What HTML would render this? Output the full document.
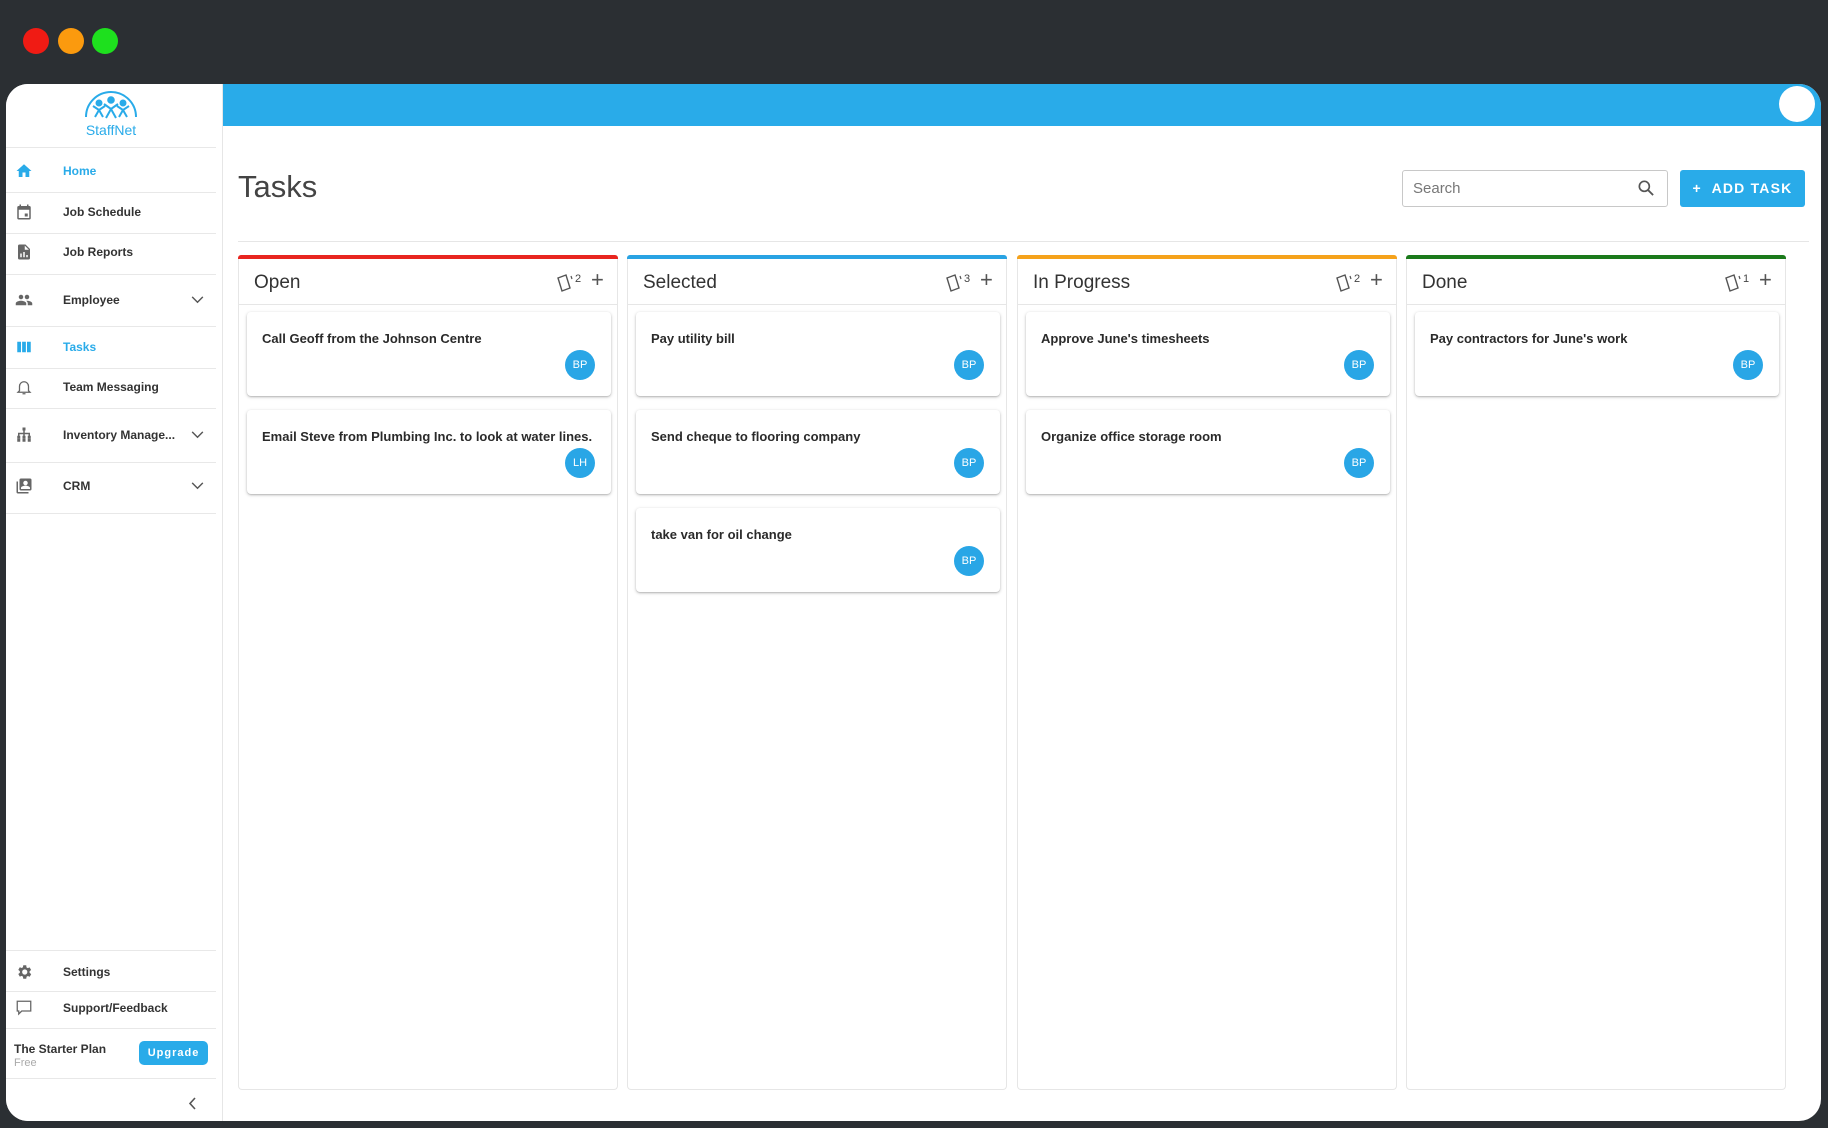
<!DOCTYPE html>
<html><head><meta charset="utf-8"><style>
*{box-sizing:border-box;margin:0;padding:0}
body{width:1828px;height:1128px;background:#2b2f33;font-family:"Liberation Sans",Arial,sans-serif;position:relative;overflow:hidden}
.abs{position:absolute}
.dot{position:absolute;width:26px;height:26px;border-radius:50%;top:28px}
.win{position:absolute;left:6px;top:84px;width:1815px;height:1037px;background:#fff;border-radius:22px;overflow:hidden}
.side{position:absolute;left:0;top:0;width:217px;height:1037px;border-right:1px solid #e6e6e6;background:#fff}
.div{position:absolute;left:0;width:210px;height:1px;background:#e8e8e8}
.mi{position:absolute;left:57px;font-size:12px;font-weight:bold;color:#333;transform:translateY(-50%)}
.ic{position:absolute;left:9px;width:18px;height:18px;transform:translateY(-50%)}
.chev{position:absolute;left:185px;transform:translateY(-50%)}
.col{position:absolute;top:171px;width:380px;height:835px;border:1px solid #e6e6e6;border-top:none;border-radius:4px;background:#fff}
.bar{position:absolute;left:-1px;right:-1px;top:0;height:4px;border-radius:3px 3px 0 0}
.ch{position:absolute;left:0;right:0;top:4px;height:46px;border-bottom:1px solid #e6e6e6}
.ct{position:absolute;left:15px;top:13px;font-size:19px;color:#333}
.card{position:absolute;left:8px;width:364px;height:84px;background:#fff;border-radius:4px;box-shadow:0 1px 3px rgba(0,0,0,.25),0 1px 1px rgba(0,0,0,.1)}
.card .t{position:absolute;left:15px;top:19px;font-size:13px;font-weight:bold;color:#2a2a2a;white-space:nowrap}
.av{position:absolute;right:16px;top:38px;width:30px;height:30px;border-radius:50%;background:#29a6e6;color:#fff;font-size:11px;text-align:center;line-height:30px}
</style></head><body>
<div class="dot" style="left:23px;background:#f01b14"></div>
<div class="dot" style="left:58px;background:#fb9a0e"></div>
<div class="dot" style="left:92px;background:#1ee01e"></div>

<div class="win">
 <div class="abs" style="left:217px;top:0;right:0;height:42px;background:#29abe9"></div>
 <div class="abs" style="left:1773px;top:2px;width:36px;height:36px;border-radius:50%;background:#fff"></div>

 <div class="side">
  <svg class="abs" style="left:76px;top:7px" width="58" height="30" viewBox="0 0 58 30" fill="none" stroke="#29abe9" stroke-width="2">
   <path d="M4 26 A25 25 0 0 1 54 26"/>
   <circle cx="17" cy="12" r="2.5" fill="#29abe9"/><circle cx="29" cy="9" r="2.8" fill="#29abe9"/><circle cx="41" cy="12" r="2.5" fill="#29abe9"/>
   <path d="M11 15l6 4 6-4M17 19l-4 7M17 19l4 7M22 13l7 5 7-5M29 18l-5 9M29 18l5 9M35 15l6 4 6-4M41 19l-4 7M41 19l4 7"/>
  </svg>
  <div class="abs" style="left:0;width:210px;top:38px;text-align:center;font-size:14px;color:#29abe9">StaffNet</div>
  <div class="div" style="top:63px"></div>
  <div class="div" style="top:108px"></div><div class="div" style="top:149px"></div><div class="div" style="top:190px"></div>
  <div class="div" style="top:242px"></div><div class="div" style="top:284px"></div><div class="div" style="top:324px"></div>
  <div class="div" style="top:378px"></div><div class="div" style="top:429px"></div>

  <svg class="ic" style="top:87px" viewBox="0 0 24 24"><path fill="#29abe9" d="M10 20v-6h4v6h5v-8h3L12 3 2 12h3v8z"/></svg>
  <div class="mi" style="top:87px;color:#29abe9">Home</div>
  <svg class="ic" style="top:128px" viewBox="0 0 24 24"><path fill="#666" d="M19 4h-1V2h-2v2H8V2H6v2H5a2 2 0 0 0-2 2v14a2 2 0 0 0 2 2h14a2 2 0 0 0 2-2V6a2 2 0 0 0-2-2zm0 16H5V9h14zm-6-6h4v4h-4z"/></svg>
  <div class="mi" style="top:128px">Job Schedule</div>
  <svg class="ic" style="top:168px" viewBox="0 0 24 24"><path fill="#666" d="M14 2H6a2 2 0 0 0-2 2v16a2 2 0 0 0 2 2h12a2 2 0 0 0 2-2V8zM9 19H7v-5h2zm4 0h-2v-7h2zm4 0h-2v-3h2zm-4-10V3.5L18.5 9z"/></svg>
  <div class="mi" style="top:168px">Job Reports</div>
  <svg class="ic" style="top:216px" viewBox="0 0 24 24"><path fill="#666" d="M16 11a3 3 0 1 0 0-6 3 3 0 0 0 0 6zm-8 0a3 3 0 1 0 0-6 3 3 0 0 0 0 6zm0 2c-2.3 0-7 1.2-7 3.5V19h14v-2.5C15 14.2 10.3 13 8 13zm8 0c-.3 0-.6 0-1 .1 1.2.8 2 2 2 3.4V19h6v-2.5c0-2.3-4.7-3.5-7-3.5z"/></svg>
  <div class="mi" style="top:216px">Employee</div>
  <svg class="chev" style="top:216px" width="13" height="8" viewBox="0 0 14 9"><path d="M1 1l6 6 6-6" stroke="#555" stroke-width="1.6" fill="none"/></svg>
  <svg class="ic" style="top:263px" viewBox="0 0 24 24"><path fill="#29abe9" d="M3 5h5v14H3zm6.5 0h5v14h-5zM16 5h5v14h-5z"/></svg>
  <div class="mi" style="top:263px;color:#29abe9">Tasks</div>
  <svg class="ic" style="top:303px" viewBox="0 0 24 24"><path fill="none" stroke="#666" stroke-width="1.7" d="M6 17V11a6 6 0 0 1 12 0v6l2 2H4zM10 21h4"/></svg>
  <div class="mi" style="top:303px">Team Messaging</div>
  <svg class="ic" style="top:351px" viewBox="0 0 24 24"><path fill="#666" d="M10 2h4v4h-1v3h7v4h1v4h-4v-4h1v-2h-5v2h1v4h-4v-4h1v-2H6v2h1v4H3v-4h1V9h7V6h-1z"/><rect x="3" y="17" width="4" height="4" fill="#666"/><rect x="10" y="17" width="4" height="4" fill="#666"/><rect x="17" y="17" width="4" height="4" fill="#666"/></svg>
  <div class="mi" style="top:351px">Inventory Manage...</div>
  <svg class="chev" style="top:351px" width="13" height="8" viewBox="0 0 14 9"><path d="M1 1l6 6 6-6" stroke="#555" stroke-width="1.6" fill="none"/></svg>
  <svg class="ic" style="top:402px" viewBox="0 0 24 24"><path fill="#666" d="M4 6H2v14a2 2 0 0 0 2 2h14v-2H4zm16-4H8a2 2 0 0 0-2 2v12a2 2 0 0 0 2 2h12a2 2 0 0 0 2-2V4a2 2 0 0 0-2-2zm-6 3a3 3 0 1 1 0 6 3 3 0 0 1 0-6zm6 11H8v-1.5c0-2 4-3 6-3s6 1 6 3z"/></svg>
  <div class="mi" style="top:402px">CRM</div>
  <svg class="chev" style="top:402px" width="13" height="8" viewBox="0 0 14 9"><path d="M1 1l6 6 6-6" stroke="#555" stroke-width="1.6" fill="none"/></svg>

  <div class="div" style="top:866px"></div><div class="div" style="top:907px"></div><div class="div" style="top:944px"></div><div class="div" style="top:994px"></div>
  <svg class="ic" style="top:888px" viewBox="0 0 24 24"><path fill="#666" d="M19.4 13a7.5 7.5 0 0 0 0-2l2.1-1.6-2-3.5-2.5 1a7 7 0 0 0-1.7-1L15 3h-4l-.4 2.7a7 7 0 0 0-1.7 1l-2.5-1-2 3.5L6.5 11a7.5 7.5 0 0 0 0 2l-2.1 1.6 2 3.5 2.5-1a7 7 0 0 0 1.7 1L11 21h4l.4-2.7a7 7 0 0 0 1.7-1l2.5 1 2-3.5zM13 15.5a3.5 3.5 0 1 1 0-7 3.5 3.5 0 0 1 0 7z"/></svg>
  <div class="mi" style="top:888px">Settings</div>
  <svg class="ic" style="top:924px" viewBox="0 0 24 24"><path fill="none" stroke="#666" stroke-width="1.7" d="M3 3h18v13H9l-4 4v-4H3z"/></svg>
  <div class="mi" style="top:924px">Support/Feedback</div>
  <div class="abs" style="left:8px;top:958px;font-size:12px;font-weight:bold;color:#333">The Starter Plan</div>
  <div class="abs" style="left:8px;top:973px;font-size:11px;color:#aaa">Free</div>
  <div class="abs" style="left:133px;top:957px;width:69px;height:24px;border-radius:5px;background:#29abe9;color:#fff;font-size:11px;font-weight:bold;letter-spacing:1px;text-align:center;line-height:24px">Upgrade</div>
  <svg class="abs" style="left:182px;top:1013px" width="9" height="13" viewBox="0 0 9 13"><path d="M7 1L2 6.5 7 12" stroke="#555" stroke-width="1.6" fill="none"/></svg>
 </div>

 <div class="abs" style="left:232px;top:85px;font-size:31px;color:#444">Tasks</div>
 <div class="abs" style="left:1396px;top:86px;width:266px;height:37px;border:1px solid #c8c8c8;border-radius:3px"></div>
 <div class="abs" style="left:1407px;top:96px;font-size:15px;color:#777">Search</div>
 <svg class="abs" style="left:1630px;top:94px" width="20" height="20" viewBox="0 0 24 24"><circle cx="10" cy="10" r="6" stroke="#555" stroke-width="2" fill="none"/><path d="M14.5 14.5l6 6" stroke="#555" stroke-width="2.2"/></svg>
 <div class="abs" style="left:1674px;top:86px;width:125px;height:37px;border-radius:3px;background:#29abe9;color:#fff;font-size:14px;font-weight:bold;letter-spacing:1.2px;line-height:37px;text-align:center">+&nbsp; ADD TASK</div>
 <div class="abs" style="left:232px;top:157px;width:1571px;height:1px;background:#e6e6e6"></div>

 <div class="col" style="left:232px"><div class="bar" style="background:#e8251f"></div><div class="ch"><div class="ct">Open</div>
  <svg class="abs" style="left:316px;top:13px" width="30" height="22" viewBox="0 0 30 22"><path d="M3 6l8-3 4 13-8 3z" stroke="#555" stroke-width="1.4" fill="none"/><path d="M16 4l1 3" stroke="#555" stroke-width="1.2"/><text x="20" y="10" font-size="11" fill="#444" font-family="Liberation Sans">2</text></svg>
  <div class="abs" style="left:352px;top:8px;font-size:22px;color:#555">+</div></div>
  <div class="card" style="top:57px"><div class="t">Call Geoff from the Johnson Centre</div><div class="av">BP</div></div>
  <div class="card" style="top:155px"><div class="t">Email Steve from Plumbing Inc. to look at water lines.</div><div class="av">LH</div></div>
 </div>
 <div class="col" style="left:621px"><div class="bar" style="background:#29a3e3"></div><div class="ch"><div class="ct">Selected</div>
  <svg class="abs" style="left:316px;top:13px" width="30" height="22" viewBox="0 0 30 22"><path d="M3 6l8-3 4 13-8 3z" stroke="#555" stroke-width="1.4" fill="none"/><path d="M16 4l1 3" stroke="#555" stroke-width="1.2"/><text x="20" y="10" font-size="11" fill="#444" font-family="Liberation Sans">3</text></svg>
  <div class="abs" style="left:352px;top:8px;font-size:22px;color:#555">+</div></div>
  <div class="card" style="top:57px"><div class="t">Pay utility bill</div><div class="av">BP</div></div>
  <div class="card" style="top:155px"><div class="t">Send cheque to flooring company</div><div class="av">BP</div></div>
  <div class="card" style="top:253px"><div class="t">take van for oil change</div><div class="av">BP</div></div>
 </div>
 <div class="col" style="left:1011px"><div class="bar" style="background:#f5a21b"></div><div class="ch"><div class="ct">In Progress</div>
  <svg class="abs" style="left:316px;top:13px" width="30" height="22" viewBox="0 0 30 22"><path d="M3 6l8-3 4 13-8 3z" stroke="#555" stroke-width="1.4" fill="none"/><path d="M16 4l1 3" stroke="#555" stroke-width="1.2"/><text x="20" y="10" font-size="11" fill="#444" font-family="Liberation Sans">2</text></svg>
  <div class="abs" style="left:352px;top:8px;font-size:22px;color:#555">+</div></div>
  <div class="card" style="top:57px"><div class="t">Approve June's timesheets</div><div class="av">BP</div></div>
  <div class="card" style="top:155px"><div class="t">Organize office storage room</div><div class="av">BP</div></div>
 </div>
 <div class="col" style="left:1400px"><div class="bar" style="background:#1b7a1b"></div><div class="ch"><div class="ct">Done</div>
  <svg class="abs" style="left:316px;top:13px" width="30" height="22" viewBox="0 0 30 22"><path d="M3 6l8-3 4 13-8 3z" stroke="#555" stroke-width="1.4" fill="none"/><path d="M16 4l1 3" stroke="#555" stroke-width="1.2"/><text x="20" y="10" font-size="11" fill="#444" font-family="Liberation Sans">1</text></svg>
  <div class="abs" style="left:352px;top:8px;font-size:22px;color:#555">+</div></div>
  <div class="card" style="top:57px"><div class="t">Pay contractors for June's work</div><div class="av">BP</div></div>
 </div>
</div>
</body></html>
